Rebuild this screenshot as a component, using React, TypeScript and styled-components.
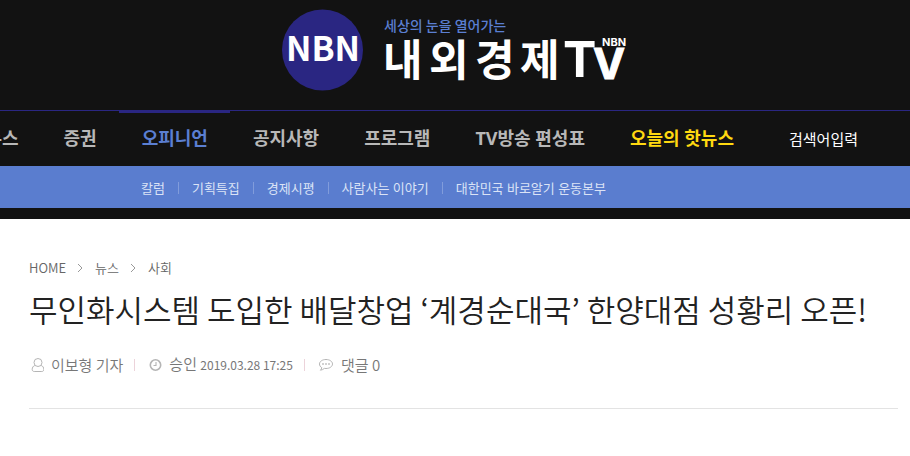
import React from "react";
import styled, { createGlobalStyle } from "styled-components";

const GlobalStyle = createGlobalStyle`
  *, *::before, *::after { box-sizing: border-box; }
  body {
    margin: 0;
    background: #fff;
    color: #222;
    font-family: "Noto Sans CJK KR", "Noto Sans", sans-serif;
  }
  a { color: inherit; text-decoration: none; }
`;

const Header = styled.header`
  background: #121212;
  padding-bottom: 11px;
`;

const Brand = styled.div`
  display: flex;
  justify-content: center;
  padding: 8px 0 18px;
`;

const BrandLink = styled.a`
  display: block;
  line-height: 0;
`;

const NavBar = styled.div`
  display: flex;
  border-top: 1px solid #2a2682;
`;

const MainNav = styled.nav`
  display: flex;
  flex: 1;
  min-width: 0;
  justify-content: flex-end;
  overflow: hidden;
`;

const NavLink = styled.a<{ $tone?: "active" | "hot" }>`
  flex: none;
  height: 55px;
  padding: 0 22px 0 23px;
  border-top: 2px solid ${(p) => (p.$tone === "active" ? "#2a2682" : "transparent")};
  color: ${(p) =>
    p.$tone === "active" ? "#5b7fd2" : p.$tone === "hot" ? "#ffd910" : "#b8b8b8"};
  font-family: "Noto Sans", "Noto Sans CJK KR", sans-serif;
  font-size: 18px;
  font-weight: 700;
  line-height: 50px;
  white-space: nowrap;
`;

const SearchForm = styled.form`
  display: flex;
  flex: none;
  width: 154px;
  padding: 0 16px 0 33px;
`;

const SearchInput = styled.input`
  width: 100%;
  padding: 0;
  border: 0;
  outline: 0;
  background: transparent;
  color: #fff;
  font-family: inherit;
  font-size: 15px;
  &::placeholder { color: #fff; opacity: 1; }
`;

const SubNav = styled.nav`
  display: flex;
  align-items: center;
  height: 42px;
  padding: 2px 0 0 128px;
  background: #5a7dcf;
`;

const SubLink = styled.a`
  display: flex;
  align-items: center;
  padding-left: 13px;
  color: #dbe3f6;
  font-family: "Noto Sans", "Noto Sans CJK KR", sans-serif;
  font-size: 13px;
  line-height: 20px;
  white-space: nowrap;
  &:not(:last-child)::after {
    content: "";
    width: 1px;
    height: 12px;
    margin-left: 13px;
    background: #819cdb;
  }
`;

const Article = styled.main`
  padding: 39px 12px 0 29px;
`;

const Crumbs = styled.nav`
  display: flex;
  align-items: center;
  gap: 11px;
  color: #666;
  font-size: 13px;
  font-weight: 350;
  line-height: 20px;
`;

const Title = styled.h1`
  margin: 7px 0 0;
  color: #222;
  font-size: 31px;
  font-weight: 350;
  line-height: 48px;
`;

const Meta = styled.ul`
  display: flex;
  align-items: center;
  margin: 20px 0 0;
  padding: 0 0 32px;
  border-bottom: 1px solid #e3e3e3;
  list-style: none;
  color: #777;
  font-size: 15px;
  font-weight: 350;
  line-height: 22px;
`;

const MetaItem = styled.li`
  display: flex;
  align-items: center;
  gap: 7px;
  white-space: nowrap;
  &:not(:last-child)::after {
    content: "";
    width: 1px;
    height: 12px;
    margin: 0 13px 0 4px;
    background: #ecd3da;
  }
`;

const Stamp = styled.time`
  font-size: 12px;
  font-weight: 400;
`;

const Icon = styled.svg`
  flex: none;
  fill: none;
  stroke: #b5b5b5;
`;

const navItems: { label: string; tone?: "active" | "hot" }[] = [
  { label: "뉴스" },
  { label: "증권" },
  { label: "오피니언", tone: "active" },
  { label: "공지사항" },
  { label: "프로그램" },
  { label: "TV방송 편성표" },
  { label: "오늘의 핫뉴스", tone: "hot" },
];

const subItems = ["칼럼", "기획특집", "경제시평", "사람사는 이야기", "대한민국 바로알기 운동본부"];

const Logo = () => (
  <svg width="350" height="84" viewBox="280 8 350 84" role="img" aria-label="NBN 내외경제TV">
    <circle cx="322.500" cy="50" r="40.500" fill="#2a2682" />
    <g fontFamily="'Noto Sans CJK KR', sans-serif">
      <text x="323" y="61" textAnchor="middle" fill="#fff" fontSize="34" fontWeight="700">NBN</text>
      <text x="384" y="31" fill="#5b7fd2" fontSize="14" fontWeight="500">세상의 눈을 열어가는</text>
      <text x="383 429 475 520" y="76" fill="#fff" fontSize="43" fontWeight="700">내외경제</text>
    </g>
    <g fill="#fff" fontFamily="Inter, sans-serif">
      <text x="563" y="77" fontSize="50" fontWeight="700">T</text>
      <text x="593" y="79" fontSize="43" fontWeight="700" stroke="#fff">V</text>
      <text x="602" y="46" fontSize="11" fontWeight="700">NBN</text>
    </g>
  </svg>
);

const Chevron = () => (
  <Icon width="7" height="10" viewBox="0 0 7 10" aria-hidden="true">
    <path d="M1 1l4 4-4 4" stroke="#999" />
  </Icon>
);

const UserIcon = () => (
  <Icon width="15" height="16" viewBox="0 0 15 16" aria-hidden="true">
    <path d="M5.800 8.500C4.200 8.900 3.200 10.600 3.200 12.400c0 1.400.8 2.100 2 2.100h7.600c1.200 0 2-.7 2-2.100 0-1.800-1-3.500-2.600-3.900M9 1.500a4 4 0 1 1 0 8 4 4 0 0 1 0-8z" />
  </Icon>
);

const ClockIcon = () => (
  <Icon width="14" height="14" viewBox="0 0 14 14" aria-hidden="true">
    <circle cx="7.500" cy="7" r="5.200" strokeWidth="1.600" />
    <path d="M8 4v3.500H5.500" strokeWidth="1.100" />
  </Icon>
);

const CommentIcon = () => (
  <Icon width="16" height="14" viewBox="0 0 16 14" aria-hidden="true">
    <path d="M8 1.500c3.700 0 6.500 2 6.500 4.500S11.700 10.500 8 10.500c-.6 0-1.100 0-1.600-.1-1.200 1-2.500 1.600-4 1.800.8-.7 1.300-1.500 1.400-2.500C2.300 8.800 1.500 7.500 1.500 6c0-2.500 2.800-4.500 6.500-4.500z" />
    <path d="M4.200 6h1.600M7.200 6h1.600M10.200 6h1.600" strokeWidth="1.600" />
  </Icon>
);

export default function App() {
  return (
    <>
      <GlobalStyle />
      <Header>
        <Brand>
          <BrandLink href="#">
            <Logo />
          </BrandLink>
        </Brand>
        <NavBar>
          <MainNav aria-label="주 메뉴">
            {navItems.map((item) => (
              <NavLink key={item.label} href="#" $tone={item.tone}>
                {item.label}
              </NavLink>
            ))}
          </MainNav>
          <SearchForm role="search">
            <SearchInput type="text" placeholder="검색어입력" aria-label="검색어입력" />
          </SearchForm>
        </NavBar>
        <SubNav aria-label="하위 메뉴">
          {subItems.map((label) => (
            <SubLink key={label} href="#">
              {label}
            </SubLink>
          ))}
        </SubNav>
      </Header>
      <Article>
        <Crumbs aria-label="현재 위치">
          <a href="#">HOME</a>
          <Chevron />
          <a href="#">뉴스</a>
          <Chevron />
          <a href="#">사회</a>
        </Crumbs>
        <Title>무인화시스템 도입한 배달창업 ‘계경순대국’ 한양대점 성황리 오픈!</Title>
        <Meta>
          <MetaItem>
            <UserIcon />
            이보형 기자
          </MetaItem>
          <MetaItem>
            <ClockIcon />
            <span>
              승인 <Stamp dateTime="2019-03-28T17:25">2019.03.28 17:25</Stamp>
            </span>
          </MetaItem>
          <MetaItem>
            <CommentIcon />
            댓글 0
          </MetaItem>
        </Meta>
      </Article>
    </>
  );
}
